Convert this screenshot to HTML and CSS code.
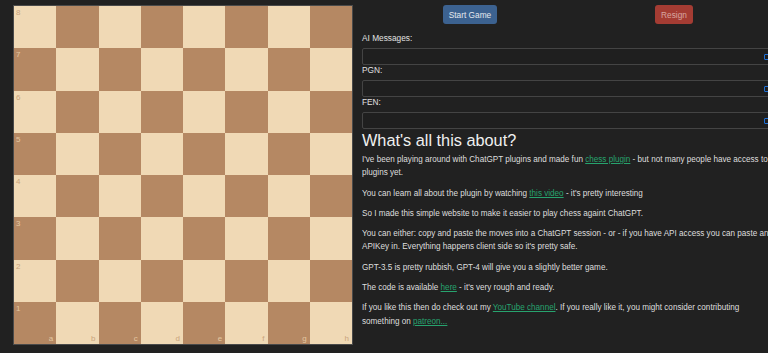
FILE: index.html
```html
<!DOCTYPE html>
<html lang="en">
<head>
    <meta charset="UTF-8">
    <meta name="viewport" content="width=device-width, initial-scale=1.0">
    <title>Chess with ChatGPT</title>
    <link rel="stylesheet" href="styles.css">
</head>
<body>
    <div class="page">
        <!-- Board -->
        <div class="board" id="board"></div>

        <div class="side">
            <div class="controls">
                <button class="btn btn-start" id="start-btn">Start Game</button>
                <button class="btn btn-resign" id="resign-btn" disabled>Resign</button>
            </div>

            <div class="field-group">
                <label for="ai-messages">AI Messages:</label>
                <div class="field">
                    <input type="text" id="ai-messages">
                    <span class="copy-icon"></span>
                </div>
            </div>

            <div class="field-group">
                <label for="pgn">PGN:</label>
                <div class="field">
                    <input type="text" id="pgn">
                    <span class="copy-icon"></span>
                </div>
            </div>

            <div class="field-group">
                <label for="fen">FEN:</label>
                <div class="field">
                    <input type="text" id="fen">
                    <span class="copy-icon"></span>
                </div>
            </div>

            <div class="about">
                <h1>What's all this about?</h1>
                <p>I've been playing around with ChatGPT plugins and made fun <a href="#">chess plugin</a> - but not many people have access to plugins yet.</p>
                <p>You can learn all about the plugin by watching <a href="#">this video</a> - it's pretty interesting</p>
                <p>So I made this simple website to make it easier to play chess againt ChatGPT.</p>
                <p>You can either: copy and paste the moves into a ChatGPT session - or - if you have API access you can paste an APIKey in. Everything happens client side so it's pretty safe.</p>
                <p>GPT-3.5 is pretty rubbish, GPT-4 will give you a slightly better game.</p>
                <p>The code is available <a href="#">here</a> - it's very rough and ready.</p>
                <p>If you like this then do check out my <a href="#">YouTube channel</a>. If you really like it, you might consider contributing something on <a href="#">patreon...</a></p>
            </div>
        </div>
    </div>

    <script>
        // Build the empty board
        const board = document.getElementById('board');
        const files = 'abcdefgh';
        for (let rank = 8; rank >= 1; rank--) {
            for (let f = 0; f < 8; f++) {
                const square = document.createElement('div');
                const light = (rank + f) % 2 === 0;
                square.className = 'square ' + (light ? 'light' : 'dark');
                if (f === 0) {
                    const num = document.createElement('span');
                    num.className = 'notation numeric';
                    num.textContent = rank;
                    square.appendChild(num);
                }
                if (rank === 1) {
                    const alpha = document.createElement('span');
                    alpha.className = 'notation alpha';
                    alpha.textContent = files[f];
                    square.appendChild(alpha);
                }
                board.appendChild(square);
            }
        }
    </script>
</body>
</html>
```

FILE: styles.css
```css
html, body {
    overflow: hidden;
}
body {
    margin: 0;
    background-color: #212121;
    color: #dedede;
    font-family: "Liberation Sans", Arial, sans-serif;
}
.page {
    display: flex;
    align-items: flex-start;
    gap: 9px;
    padding: 5px 0 0 13px;
}
.board {
    flex: none;
    display: grid;
    grid-template-columns: repeat(8, 1fr);
    grid-template-rows: repeat(8, 1fr);
    width: 338px;
    height: 338px;
    border: 1px solid #4a4a4a;
}
.square {
    position: relative;
}
.light {
    background-color: #f0d9b5;
    color: #c9a47e;
}
.dark {
    background-color: #b58863;
    color: #e3c7a2;
}
.notation {
    position: absolute;
    font-size: 8px;
    line-height: 1;
    cursor: default;
}
.numeric {
    top: 3px;
    left: 2px;
}
.alpha {
    bottom: 1px;
    right: 3px;
}
.side {
    flex: none;
    width: 414px;
}
.controls {
    display: grid;
    grid-template-columns: 1fr 1fr;
    justify-items: center;
    padding: 0 0 0 6px;
}
.btn {
    height: 19px;
    padding: 0 6px;
    border: none;
    border-radius: 3px;
    font-family: inherit;
    font-size: 8.3px;
    cursor: pointer;
}
.btn-start {
    background-color: #3c6290;
    color: #e4e8ee;
}
.btn-resign {
    background-color: #a43c33;
    color: #d9a6a0;
    cursor: default;
}
.field-group label {
    display: block;
    margin-top: 9px;
    margin-bottom: 4px;
    font-size: 8.3px;
    line-height: 11px;
    color: #e2e2e2;
}
.field-group + .field-group label {
    margin-top: 0;
}
.field {
    display: flex;
    align-items: center;
    height: 15px;
    padding: 0 3px;
    border: 1px solid #444;
    border-radius: 2px;
    background-color: #1f1f1f;
}
.field input {
    flex: 1;
    min-width: 0;
    border: none;
    background: transparent;
    color: #ddd;
    font-size: 8.3px;
    outline: none;
}
.copy-icon {
    width: 4px;
    height: 4px;
    border: 1.5px solid #1f6fd4;
    border-radius: 1px;
    margin-right: 2px;
}
.about h1 {
    margin: 2px 0 4px;
    font-size: 16.3px;
    line-height: 18px;
    font-weight: normal;
    color: #f0f0f0;
}
.about p {
    margin: 0 0 7px;
    font-size: 8.15px;
    line-height: 13.3px;
}
.about a {
    color: #27a36e;
}
```
